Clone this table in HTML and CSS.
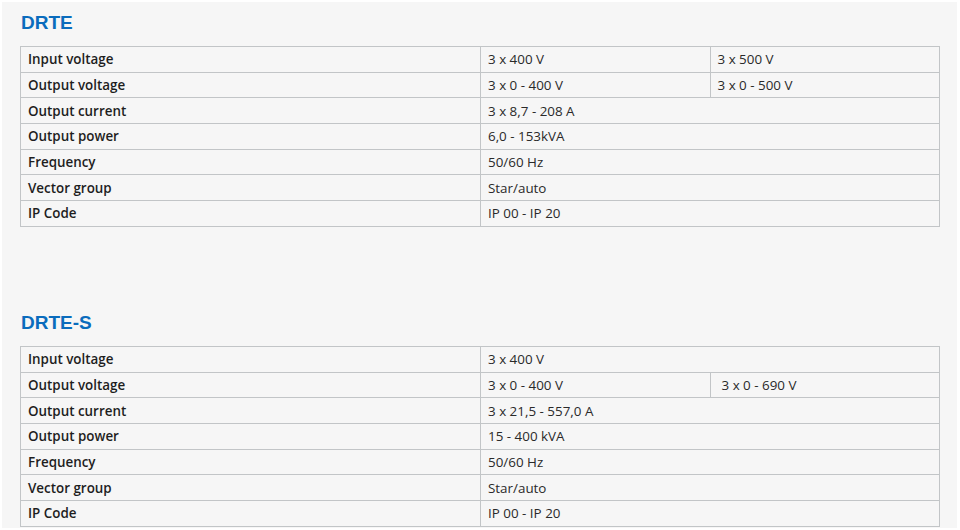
FILE: index.html
```html
<!DOCTYPE html>
<html>
<head>
<meta charset="utf-8">
<link rel="stylesheet" href="styles.css">
</head>
<body>
<main class="page">
  <section class="block">
    <h2 class="title">DRTE</h2>
    <table class="spec">
      <tr><th>Input voltage</th><td class="half">3 x 400 V</td><td class="half">3 x 500 V</td></tr>
      <tr><th>Output voltage</th><td class="half">3 x 0 - 400 V</td><td class="half">3 x 0 - 500 V</td></tr>
      <tr><th>Output current</th><td colspan="2">3 x 8,7 - 208 A</td></tr>
      <tr><th>Output power</th><td colspan="2">6,0 - 153kVA</td></tr>
      <tr><th>Frequency</th><td colspan="2">50/60 Hz</td></tr>
      <tr><th>Vector group</th><td colspan="2">Star/auto</td></tr>
      <tr><th>IP Code</th><td colspan="2">IP 00 - IP 20</td></tr>
    </table>
  </section>
  <section class="block second">
    <h2 class="title">DRTE-S</h2>
    <table class="spec">
      <tr><th>Input voltage</th><td colspan="2">3 x 400 V</td></tr>
      <tr><th>Output voltage</th><td class="half">3 x 0 - 400 V</td><td class="half wide">3 x 0 - 690 V</td></tr>
      <tr><th>Output current</th><td colspan="2">3 x 21,5 - 557,0 A</td></tr>
      <tr><th>Output power</th><td colspan="2">15 - 400 kVA</td></tr>
      <tr><th>Frequency</th><td colspan="2">50/60 Hz</td></tr>
      <tr><th>Vector group</th><td colspan="2">Star/auto</td></tr>
      <tr><th>IP Code</th><td colspan="2">IP 00 - IP 20</td></tr>
    </table>
  </section>
</main>
</body>
</html>
```

FILE: styles.css
```css
html, body {
  margin: 0;
  padding: 0;
  background: #ffffff;
}
body {
  font-family: "Open Sans", "Noto Sans", sans-serif;
  color: #222;
}
.page {
  margin: 2px 3px 2px 2px;
  height: 526px;
  background: #f6f6f6;
  padding: 0 0 0 18px;
  box-sizing: border-box;
  overflow: hidden;
}
.block {
  padding-top: 9px;
}
.block.second {
  padding-top: 84px;
}
.title {
  margin: 0 0 0 1px;
  font-family: "Liberation Sans", Arial, sans-serif;
  font-weight: bold;
  font-size: 19px;
  line-height: 24px;
  color: #0a6cbd;
  height: 35px;
}
.spec {
  border-collapse: collapse;
  width: 920px;
  table-layout: fixed;
  font-size: 13.4px;
}
.spec tr {
  height: 25.7px;
}
.spec th, .spec td {
  border: 1px solid #c2c5c7;
  padding: 0 7px;
  text-align: left;
  line-height: 18px;
  white-space: nowrap;
}
.spec th {
  width: 445px;
  font-weight: 600;
  color: #1e1e1e;
}
.spec td {
  font-weight: 400;
  color: #2a2a2a;
}
.spec td.wide {
  padding-left: 11px;
}
```
